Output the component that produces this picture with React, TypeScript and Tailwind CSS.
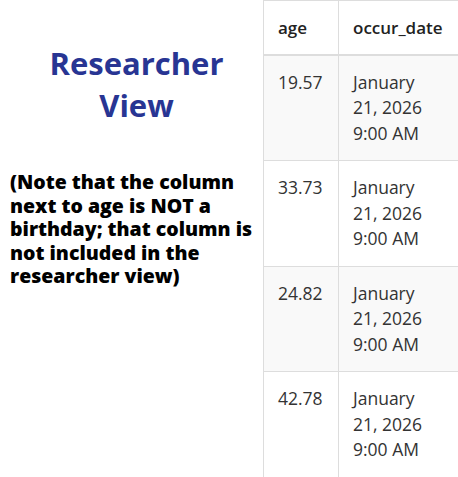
import React from "react";

const rows = ["19.57", "33.73", "24.82", "42.78"];

export default function App() {
  return (
    <div
      className="w-[458px] h-[477px] overflow-hidden bg-white flex"
      style={{ fontFamily: '"Open Sans", sans-serif' }}
    >
      <div className="w-[263px] shrink-0 pl-[10px]">
        <h1 className="mt-[42px] text-center text-[31px] leading-[42px] font-bold text-[#283593]">
          Researcher
          <br />
          View
        </h1>
        <p className="mt-[44px] text-[19.5px] leading-[23.5px] font-extrabold text-black">
          (Note that the column next to age is NOT a birthday; that column is not included in the researcher view)
        </p>
      </div>
      <div className="shrink-0">
        <table className="border-collapse text-[17.5px] leading-[25.5px] text-[#333]">
          <thead>
            <tr>
              <th className="w-[75px] text-left font-semibold text-[#222] text-[17px] border border-[#ddd] border-b-2 px-[14px] pt-[14px] pb-[13px] align-top">
                age
              </th>
              <th className="w-[130px] text-left font-semibold text-[#222] text-[17px] border border-[#ddd] border-b-2 px-[14px] pt-[14px] pb-[13px] align-top">
                occur_date
              </th>
            </tr>
          </thead>
          <tbody>
            {rows.map((a, i) => (
              <tr key={a} className={i % 2 === 0 ? "bg-[#f9f9f9]" : "bg-white"}>
                <td className="border border-[#ddd] px-[14px] py-[14px] align-top">{a}</td>
                <td className="border border-[#ddd] px-[14px] py-[14px] align-top">
                  January
                  <br />
                  21, 2026
                  <br />
                  9:00 AM
                </td>
              </tr>
            ))}
          </tbody>
        </table>
      </div>
    </div>
  );
}
